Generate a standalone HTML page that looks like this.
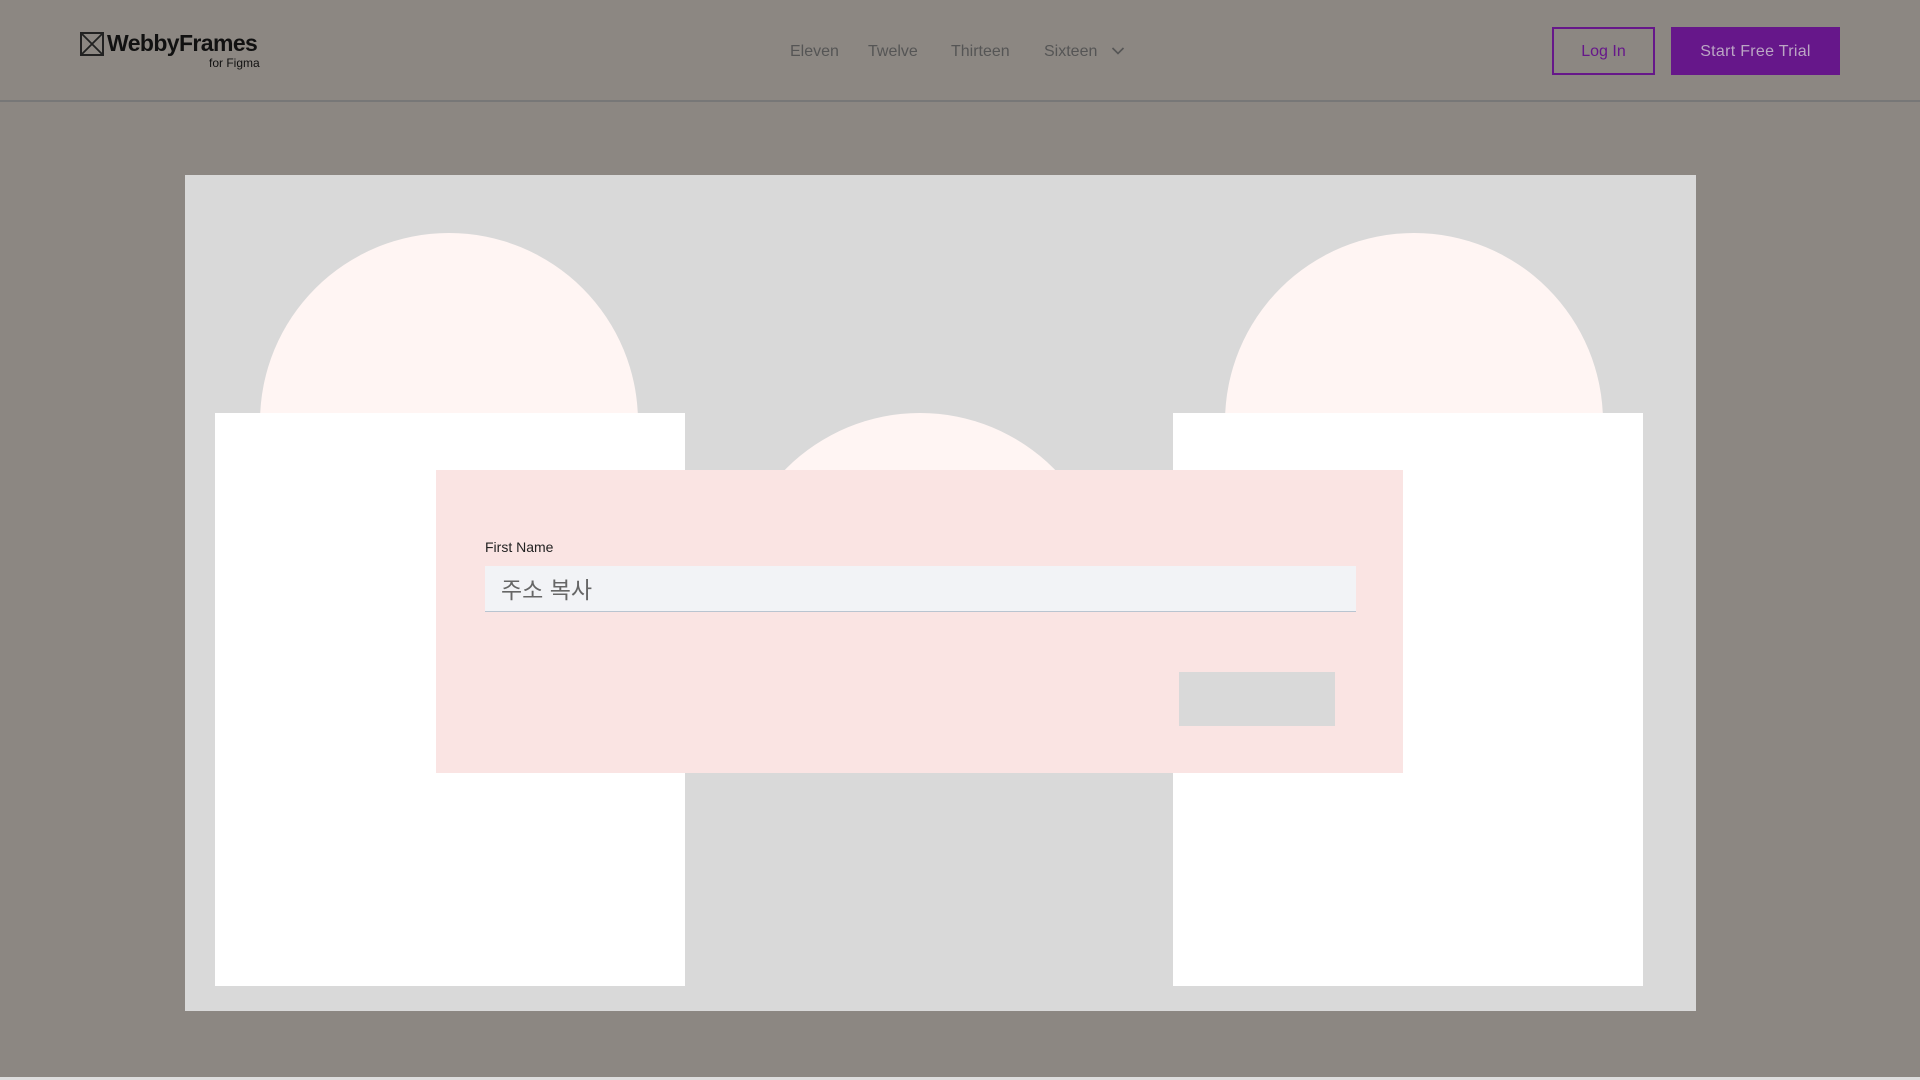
<!DOCTYPE html>
<html><head><meta charset="utf-8"><style>
*{margin:0;padding:0;box-sizing:border-box}
body{width:1920px;height:1080px;background:#8c8782;font-family:"Liberation Sans","Noto Sans CJK KR",sans-serif;position:relative;overflow:hidden}
.a{position:absolute}
.nav{font-size:16px;color:#555;top:43px}
.c{position:absolute;width:378px;height:378px;border-radius:50%;background:#fff5f3}
</style></head><body>
<svg class="a" style="left:80px;top:32px" width="24" height="24" viewBox="0 0 24 24"><rect x="1" y="1" width="22" height="22" fill="none" stroke="#222" stroke-width="2"/><path d="M1 1L23 23M23 1L1 23" stroke="#222" stroke-width="1.8"/></svg>
<div class="a" style="left:107px;top:30px;font-size:23px;font-weight:bold;color:#111;letter-spacing:-0.6px">WebbyFrames</div>
<div class="a" style="left:209px;top:56px;font-size:12px;color:#111">for Figma</div>
<div class="a nav" style="left:790px">Eleven</div>
<div class="a nav" style="left:868px">Twelve</div>
<div class="a nav" style="left:951px">Thirteen</div>
<div class="a nav" style="left:1044px">Sixteen</div>
<svg class="a" style="left:1111px;top:46px" width="14" height="10" viewBox="0 0 14 10"><path d="M1.5 2L7 7.5L12.5 2" fill="none" stroke="#555" stroke-width="1.6"/></svg>
<div class="a" style="left:1552px;top:27px;width:103px;height:48px;border:2px solid #66178a;color:#66178a;font-size:16px;display:flex;align-items:center;justify-content:center;padding-top:2px">Log In</div>
<div class="a" style="left:1671px;top:27px;width:169px;height:48px;background:#66178a;color:#bba6c4;font-size:16px;display:flex;align-items:center;justify-content:center;letter-spacing:0.3px;padding-top:2px">Start Free Trial</div>
<div class="a" style="left:0;top:100px;width:1920px;height:2px;background:#777"></div>
<div class="a" style="left:185px;top:175px;width:1511px;height:836px;background:#d9d9d9;overflow:hidden">
<div class="c" style="left:75px;top:58px"></div>
<div class="c" style="left:1040px;top:58px"></div>
<div class="a" style="left:546px;top:238px;width:378px;height:189px;overflow:hidden"><div class="c" style="left:0;top:0"></div></div>
<div class="a" style="left:30px;top:238px;width:470px;height:573px;background:#fff"></div>
<div class="a" style="left:988px;top:238px;width:470px;height:573px;background:#fff"></div>
<div class="a" style="left:251px;top:295px;width:967px;height:303px;background:#fae4e3"></div>
</div>
<div class="a" style="left:485px;top:539px;font-size:14px;color:#222">First Name</div>
<div class="a" style="left:485px;top:566px;width:871px;height:46px;background:#f2f3f6;border-bottom:1.5px solid #b9c4d0"></div>
<div class="a" style="left:501px;top:571px;font-size:23px;color:#666">주소 복사</div>
<div class="a" style="left:1179px;top:672px;width:156px;height:54px;background:#d9d9d9"></div>
<div class="a" style="left:0;top:1077px;width:1920px;height:3px;background:#ddd"></div>
</body></html>
